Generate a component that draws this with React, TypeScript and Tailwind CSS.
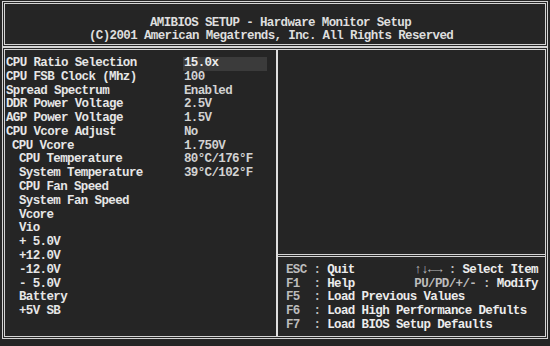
import React from "react";

const rows: { label: string; value?: string; indent: 0 | 1 | 2; sel?: boolean }[] = [
  { label: "CPU Ratio Selection", value: "15.0x", indent: 0, sel: true },
  { label: "CPU FSB Clock (Mhz)", value: "100", indent: 0 },
  { label: "Spread Spectrum", value: "Enabled", indent: 0 },
  { label: "DDR Power Voltage", value: "2.5V", indent: 0 },
  { label: "AGP Power Voltage", value: "1.5V", indent: 0 },
  { label: "CPU Vcore Adjust", value: "No", indent: 0 },
  { label: "CPU Vcore", value: "1.750V", indent: 1 },
  { label: "CPU Temperature", value: "80°C/176°F", indent: 2 },
  { label: "System Temperature", value: "39°C/102°F", indent: 2 },
  { label: "CPU Fan Speed", indent: 2 },
  { label: "System Fan Speed", indent: 2 },
  { label: "Vcore", indent: 2 },
  { label: "Vio", indent: 2 },
  { label: "+ 5.0V", indent: 2 },
  { label: "+12.0V", indent: 2 },
  { label: "-12.0V", indent: 2 },
  { label: "- 5.0V", indent: 2 },
  { label: "Battery", indent: 2 },
  { label: "+5V SB", indent: 2 },
];

const help: { k: string; t: string; rk?: string; rt?: string }[] = [
  { k: "ESC :", t: " Quit", rk: "↑↓←→ :", rt: " Select Item" },
  { k: "F1  :", t: " Help", rk: "PU/PD/+/- :", rt: " Modify" },
  { k: "F5  :", t: " Load Previous Values" },
  { k: "F6  :", t: " Load High Performance Defults" },
  { k: "F7  :", t: " Load BIOS Setup Defaults" },
];

export default function App() {
  return (
    <div
      className="w-[550px] h-[346px] bg-[#252525] pt-[1px] px-[2px] overflow-hidden text-[12.5px] tracking-[-0.63px] font-bold text-[#e6e6e6]"
      style={{ fontFamily: '"Liberation Mono", "DejaVu Sans Mono", monospace' }}
    >
      {/* Header */}
      <div className="h-[46px] border-[3px] border-double border-[#d4d4d4] pt-[13px] leading-[12.5px] whitespace-pre text-[#dedede]">
        <div className="pl-[145px]">AMIBIOS SETUP - Hardware Monitor Setup</div>
        <div className="pl-[84px]">(C)2001 American Megatrends, Inc. All Rights Reserved</div>
      </div>

      {/* Main */}
      <div className="h-[292px] border-[3px] border-double border-[#d4d4d4] flex">
        {/* Left panel */}
        <div className="w-[273px] border-r-2 border-[#e0e0e0] pt-[7px] pl-[1px] leading-[13.78px] whitespace-pre">
          {rows.map((r, i) => (
            <div key={i} className="flex">
              <div
                className={
                  "w-[178px] shrink-0 " +
                  (r.indent === 1 ? "pl-[6px]" : r.indent === 2 ? "pl-[13px]" : "")
                }
              >
                {r.label}
              </div>
              {r.value !== undefined && (
                <div
                  className={
                    r.sel
                      ? "w-[84px] -ml-[1px] pl-[1px] bg-[#3b3b3b] text-[#ececec]"
                      : "text-[#d2d2d2]"
                  }
                >
                  {r.value}
                </div>
              )}
            </div>
          ))}
        </div>

        {/* Right panel */}
        <div className="flex-1 flex flex-col">
          <div className="flex-1" />
          <div className="h-[82px] border-t-[3px] border-double border-[#d4d4d4] pt-[7px] pl-[8px] pr-[7px] leading-[13.7px] whitespace-pre">
            {help.map((h, i) => (
              <div key={i} className="flex justify-between">
                <div>
                  <span className="text-[#bcbcbc]">{h.k}</span>
                  <span className="text-[#ececec]">{h.t}</span>
                </div>
                {h.rk && (
                  <div>
                    <span className="text-[#bcbcbc]">{h.rk}</span>
                    <span className="text-[#ececec]">{h.rt}</span>
                  </div>
                )}
              </div>
            ))}
          </div>
        </div>
      </div>
    </div>
  );
}
